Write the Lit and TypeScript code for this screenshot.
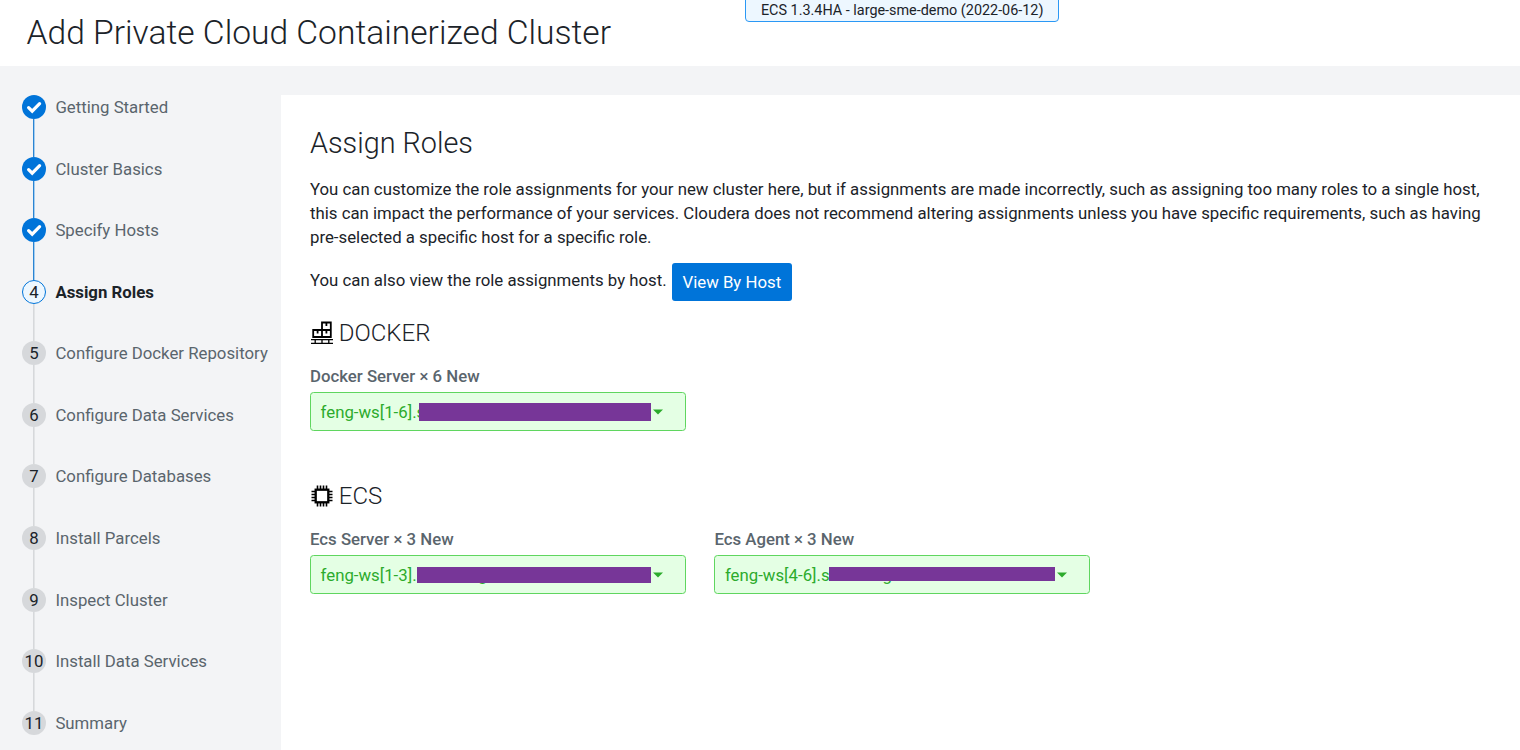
import { LitElement, html, css, svg, nothing } from "lit";
import { customElement, property } from "lit/decorators.js";

type StepState = "done" | "current" | "todo";

const STEPS = [
  "Getting Started",
  "Cluster Basics",
  "Specify Hosts",
  "Assign Roles",
  "Configure Docker Repository",
  "Configure Data Services",
  "Configure Databases",
  "Install Parcels",
  "Inspect Cluster",
  "Install Data Services",
  "Summary",
];
const CURRENT = 3;

const dockerIcon = html`<svg width="24" height="24" viewBox="0 0 24 24" fill="none" stroke="#000" stroke-width="1.8">
  ${svg`<path d="M12 9V1.5H20.8V16H3.2V9H20.8M12 9V16"/>
  <path d="M7.6 9V12.4M16.4 9V12.4M16.4 1.5V4.9" stroke-width="1.8"/>
  <path d="M1 18.7H23M1 22.3H23M5.2 19V22.3M12 19V22.3M18.8 19V22.3" stroke-width="1.3"/>`}
</svg>`;

const chipIcon = html`<svg width="24" height="24" viewBox="0 0 24 24" fill="none" stroke="#000">
  ${svg`<rect x="5.7" y="5.7" width="12.6" height="12.6" stroke-width="2.3"/>
  <path d="M7.5 1.5V5M10.5 1.5V5M13.5 1.5V5M16.5 1.5V5M7.5 19V22.5M10.5 19V22.5M13.5 19V22.5M16.5 19V22.5M1.5 7.5H5M1.5 10.5H5M1.5 13.5H5M1.5 16.5H5M19 7.5H22.5M19 10.5H22.5M19 13.5H22.5M19 16.5H22.5" stroke-width="1.6"/>`}
</svg>`;

@customElement("wizard-step")
class WizardStep extends LitElement {
  @property({ type: Number }) number = 1;
  @property() label = "";
  @property() state: StepState = "todo";
  @property({ type: Boolean }) last = false;

  static styles = css`
    :host { display: flex; height: 61.56px; gap: 9.4px; }
    .rail { display: flex; flex-direction: column; align-items: center; width: 24px; flex: none; }
    .dot {
      box-sizing: border-box; width: 24px; height: 24px; flex: none; border-radius: 50%;
      display: flex; align-items: center; justify-content: center;
      background: #d6d8db; color: #1b2329; font-size: 16.8px; line-height: 24px;
    }
    .dot.done { background: #0074d9; }
    .dot.current { background: #edf7ff; border: 1.2px solid #0074d9; }
    .line { width: 2px; flex: 1; background: linear-gradient(90deg, #d6d8db 50%, #e2e4e6 50%); }
    .line.done { background: linear-gradient(90deg, #2a84d2 50%, #a5cdef 50%); }
    .label { font-size: 16.8px; line-height: 24px; color: #5a656d; white-space: nowrap; }
    .label.current { color: #1b2329; font-weight: 700; }
  `;

  render() {
    return html`
      <div class="rail">
        <div class="dot ${this.state}">
          ${this.state === "done"
            ? html`<svg width="24" height="24" viewBox="0 0 24 24"><path d="M6.6 12.6L10.2 16.2L17.6 8.7" fill="none" stroke="#fff" stroke-width="3.2" stroke-linecap="round"/></svg>`
            : this.number}
        </div>
        ${this.last ? nothing : html`<div class="line ${this.state}"></div>`}
      </div>
      <div class="label ${this.state}">${this.label}</div>
    `;
  }
}

@customElement("role-select")
class RoleSelect extends LitElement {
  @property() label = "";
  @property() hosts = "";
  @property({ type: Number }) from = 0;
  @property({ type: Number }) to = 0;
  @property({ type: Number }) top = 0;
  @property({ type: Number }) tall = 0;
  @property({ type: Number }) tail = 0;

  static styles = css`
    :host { display: block; width: 375.6px; }
    .label { font-size: 16.8px; line-height: 24px; font-weight: 500; color: #5a656d; margin-bottom: 4px; }
    .box {
      box-sizing: border-box; position: relative; height: 39px; border: 1.4px solid #5fd65f; border-radius: 3.5px;
      background: #e4ffe4; color: #2cab2c; display: flex; align-items: center;
      justify-content: space-between; padding: 1.2px 21.8px 0 9.6px; font-size: 16.8px; line-height: 24px;
    }
    .mask { position: absolute; background: #773698; }
    .tail { position: absolute; top: 7px; }
  `;

  render() {
    return html`
      <div class="label">${this.label}</div>
      <div class="box">
        <span>${this.hosts}</span>
        <svg width="10" height="6" viewBox="0 0 10 6"><path d="M0 .4H10L5 5.6Z" fill="#2cab2c"/></svg>
        ${this.tail ? html`<span class="tail" style="left:${this.tail}px">g</span>` : nothing}
        <div class="mask" style="left:${this.from}px;width:${this.to - this.from}px;top:${this.top}px;height:${this.tall}px"></div>
      </div>
    `;
  }
}

@customElement("app-root")
class AppRoot extends LitElement {
  static styles = css`
    :host {
      display: flex; flex-direction: column; position: relative; height: 750px; overflow: hidden;
      font-family: Roboto, "Liberation Sans", sans-serif; font-size: 16.8px; line-height: 24px;
      color: #1b2329; background: #f3f4f6;
    }
    .header { flex: none; height: 66px; box-sizing: border-box; background: #fff; padding: 12px 26.6px; }
    .title { margin: 0; font-size: 33.6px; line-height: 41px; font-weight: 300; white-space: nowrap; }
    .badge {
      position: absolute; left: 745.4px; top: -4px; width: 313.6px; height: 26px; box-sizing: border-box;
      border: 1.4px solid #2a98f5; border-radius: 4px; background: #edf7ff; padding-top: 1.6px;
      font-size: 14.4px; line-height: 24px; text-align: center; white-space: nowrap;
    }
    .body { display: flex; flex: 1; min-height: 0; padding-top: 29px; }
    .steps { width: 259px; flex: none; padding: 0.2px 0 0 22px; }
    .main { flex: 1; min-width: 0; background: #fff; padding: 29px 29px 0; }
    h2 { margin: 0; font-size: 28.8px; line-height: 38px; font-weight: 300; }
    p { margin: 15px 0 0; white-space: nowrap; }
    .by-host { display: flex; margin-top: 13.8px; gap: 5.2px; }
    .by-host span { padding-top: 5.4px; }
    .button {
      border: 0; border-radius: 3px; background: #0074d9; color: #fff; width: 120px; height: 38px; padding: 0;
      font: 400 16.8px/24px Roboto, sans-serif;
    }
    h3 { display: flex; align-items: center; gap: 4.8px; margin: 17.2px 0 0; font-size: 24px; line-height: 30px; font-weight: 300; }
    .roles { display: flex; gap: 28.8px; margin-top: 16px; }
    .ecs { margin-top: 50px; }
  `;

  render() {
    return html`
      <div class="header"><h1 class="title">Add Private Cloud Containerized Cluster</h1></div>
      <div class="badge">ECS 1.3.4HA - large-sme-demo (2022-06-12)</div>
      <div class="body">
        <nav class="steps">
          ${STEPS.map((label, i) => html`<wizard-step
            .number=${i + 1} .label=${label} .last=${i === STEPS.length - 1}
            .state=${i < CURRENT ? "done" : i === CURRENT ? "current" : "todo"}></wizard-step>`)}
        </nav>
        <main class="main">
          <h2>Assign Roles</h2>
          <p>You can customize the role assignments for your new cluster here, but if assignments are made incorrectly, such as assigning too many roles to a single host,<br>this can impact the performance of your services. Cloudera does not recommend altering assignments unless you have specific requirements, such as having<br>pre-selected a specific host for a specific role.</p>
          <div class="by-host">
            <span>You can also view the role assignments by host.</span>
            <button class="button">View By Host</button>
          </div>
          <h3>${dockerIcon}DOCKER</h3>
          <div class="roles">
            <role-select label="Docker Server × 6 New" hosts="feng-ws[1-6].s" .from=${108} .to=${340} .top=${10} .tall=${18}></role-select>
          </div>
          <h3 class="ecs">${chipIcon}ECS</h3>
          <div class="roles">
            <role-select label="Ecs Server × 3 New" hosts="feng-ws[1-3]." .from=${106} .to=${340} .top=${11} .tall=${16} .tail=${167}></role-select>
            <role-select label="Ecs Agent × 3 New" hosts="feng-ws[4-6].s" .from=${113.6} .to=${339.6} .top=${11} .tall=${14} .tail=${167}></role-select>
          </div>
        </main>
      </div>
    `;
  }
}
